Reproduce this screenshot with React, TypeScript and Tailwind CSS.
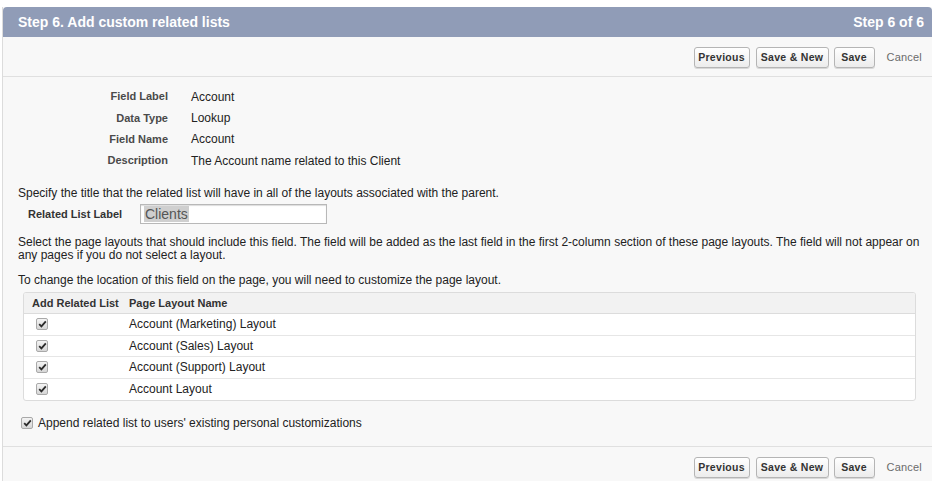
import React from 'react'

const font = { fontFamily: '"Liberation Sans", Arial, sans-serif' }

function Check({ className = '' }: { className?: string }) {
  return (
    <span
      className={`inline-flex h-[12px] w-[12px] items-center justify-center rounded-[2px] border border-[#a9a9a9] bg-gradient-to-b from-[#f4f4f4] to-[#d6d6d6] ${className}`}
    >
      <svg width="9" height="8" viewBox="0 0 9 8">
        <path d="M1.2 4.2 L3.4 6.4 L7.8 1.4" fill="none" stroke="#2b2b2b" strokeWidth="1.8" />
      </svg>
    </span>
  )
}

function ButtonBar() {
  const btn =
    'h-[21px] rounded-[3px] border border-[#b5b5b5] bg-gradient-to-b from-white to-[#ececec] text-[10.5px] font-bold tracking-[0.3px] text-[#333] shadow-[0_1px_0_#d8d8d8]'
  return (
    <div className="flex items-center justify-end pr-[10px]">
      <button className={`${btn} w-[56px]`}>Previous</button>
      <button className={`${btn} ml-[6px] w-[73px]`}>Save &amp; New</button>
      <button className={`${btn} ml-[5px] w-[41px]`}>Save</button>
      <span className="ml-[12px] text-[11px] tracking-[0.2px] text-[#6b6b6b]">Cancel</span>
    </div>
  )
}

const fields: [string, string][] = [
  ['Field Label', 'Account'],
  ['Data Type', 'Lookup'],
  ['Field Name', 'Account'],
  ['Description', 'The Account name related to this Client'],
]

const layouts = [
  'Account (Marketing) Layout',
  'Account (Sales) Layout',
  'Account (Support) Layout',
  'Account Layout',
]

export default function App() {
  return (
    <div className="h-[481px] w-[936px] overflow-hidden bg-white pt-[7px] text-[#222]" style={font}>
      <div className="ml-[2px] mr-[4px] border-l border-[#dcdcdc] bg-[#f8f8f8]">
        <div className="flex h-[30px] items-center justify-between rounded-t-[4px] bg-[#909cb7] pl-[15px] pr-[8px] text-[14px] font-bold text-white">
          <span>Step 6. Add custom related lists</span>
          <span>Step 6 of 6</span>
        </div>

        <div className="flex h-[40px] items-center justify-end border-b border-[#e0e0e0] pt-[2px]">
          <ButtonBar />
        </div>

        <div className="grid grid-cols-[165px_1fr] gap-x-[23px] pt-[9px]">
          {fields.map(([label, value]) => (
            <React.Fragment key={label}>
              <div className="flex h-[21.3px] items-center justify-end text-[11px] font-bold text-[#4a4a4a]">
                {label}
              </div>
              <div className="flex h-[21.3px] items-center text-[12px] text-[#222]">{value}</div>
            </React.Fragment>
          ))}
        </div>

        <div className="mt-[15px] pl-[15px] text-[12px] leading-[14px]">
          Specify the title that the related list will have in all of the layouts associated with the parent.
        </div>
        <div className="mt-[4px] flex items-center pl-[25px]">
          <span className="w-[112px] text-[11px] font-bold text-[#333]">Related List Label</span>
          <div className="flex h-[20px] w-[187px] items-center border border-[#b8b8b8] bg-white pl-[3px] shadow-[inset_0_1px_1px_#ddd]">
            <span className="bg-[#cfcfcf] px-[1px] text-[14px] leading-[16px] text-[#555]">Clients</span>
          </div>
        </div>

        <div className="mt-[12px] pl-[15px] pr-[10px] text-[12px] leading-[13px]">
          Select the page layouts that should include this field. The field will be added as the last field in the first
          2-column section of these page layouts. The field will not appear on any pages if you do not select a layout.
        </div>
        <div className="mt-[11px] pl-[15px] text-[12px] leading-[14px]">
          To change the location of this field on the page, you will need to customize the page layout.
        </div>

        <div className="ml-[20px] mr-[16px] mt-[5px] overflow-hidden rounded-[3px] border border-[#dcdcdc] bg-white">
          <div className="flex h-[21px] items-center border-b border-[#dcdcdc] bg-[#f2f2f2] text-[11px] font-bold text-[#333]">
            <span className="w-[100px] pl-[8px]">Add Related List</span>
            <span className="pl-[5px]">Page Layout Name</span>
          </div>
          {layouts.map((name, i) => (
            <div
              key={name}
              className={`flex h-[21.5px] items-center text-[12px] text-[#222] ${i < layouts.length - 1 ? 'border-b border-[#e6e6e6]' : ''}`}
            >
              <span className="flex w-[100px] pl-[12px]">
                <Check />
              </span>
              <span className="pl-[5px]">{name}</span>
            </div>
          ))}
        </div>

        <div className="mt-[13px] flex items-center pl-[18px] text-[12px]">
          <Check className="mr-[5px]" />
          <span>Append related list to users' existing personal customizations</span>
        </div>

        <div className="mt-[14px] flex h-[41px] items-center justify-end border-t border-[#e0e0e0] pt-[1px]">
          <ButtonBar />
        </div>
      </div>
    </div>
  )
}
